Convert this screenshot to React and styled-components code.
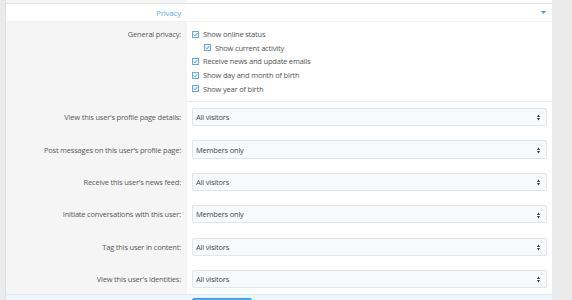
import React from "react"
import styled, { createGlobalStyle } from "styled-components"

const GlobalStyle = createGlobalStyle`
  html, body {
    margin: 0;
    padding: 0;
    background: #ebebeb;
    font-family: "Open Sans", "Noto Sans", sans-serif;
    font-size: 7.5px;
    letter-spacing: -0.2px;
    color: #555;
  }
`

const Page = styled.div`
  padding-left: 5px;
  height: 300px;
  overflow: hidden;
`

const Panel = styled.div`
  width: 546px;
  border-left: 1px solid #e0e0e0;
  background: #fff;
`

const Row = styled.div`
  display: grid;
  grid-template-columns: 181px 1fr;
`

const StubRow = styled(Row)`
  height: 3px;
  border-bottom: 1px solid #e4e4e4;
`

const LabelCell = styled.div`
  background: #f5f5f5;
  text-align: right;
  padding-right: 6px;
  color: #5a5a5a;
`

const ValueCell = styled.div`
  background: #fff;
  padding: 0 5px;
  border-bottom: ${(p) => (p.$separated ? "1px solid #ececec" : "0")};
`

const Header = styled.div`
  display: grid;
  grid-template-columns: 181px 1fr;
  align-items: center;
  height: 17px;
  background: #fff;
  border-bottom: 1px solid #f2f2f2;
`

const HeaderTitle = styled.div`
  text-align: right;
  padding-right: 6px;
  color: #62aee2;
  font-size: 8px;
`

const Toggle = styled.div`
  display: flex;
  justify-content: flex-end;
  padding-right: 6px;
`

const CheckList = styled.div`
  padding: 5.5px 0 6px;
`

const CheckLine = styled.div`
  display: flex;
  align-items: center;
  gap: 4px;
  height: 13.6px;
  padding-left: ${(p) => (p.$indent ? "12px" : "0")};
  color: #555;
`

const CheckLabel = styled(LabelCell)`
  line-height: 13.6px;
  padding-top: 5.5px;
`

const SelectRow = styled(Row)`
  & > div {
    padding-top: 5.5px;
    padding-bottom: ${(p) => (p.$last ? "5.5px" : "8.6px")};
  }
`

const SelectLabel = styled(LabelCell)`
  display: flex;
  align-items: center;
  justify-content: flex-end;
`

const SelectBox = styled.div`
  position: relative;
  height: 18.3px;
  box-sizing: border-box;
  border: 1px solid #e1e6ea;
  border-radius: 2px;
  background: #f6fafd;
  display: flex;
  align-items: center;
  padding-left: 3px;
  color: #484848;
`

const Arrows = styled.svg`
  position: absolute;
  right: 6px;
  top: 5.5px;
`

const SubmitBar = styled.div`
  background: #eef6fd;
  border-top: 1px solid #dde9f3;
  padding: 3px 0 0 186px;
  height: 20px;
`

const Button = styled.div`
  width: 60px;
  height: 20px;
  box-sizing: border-box;
  border: 1px solid #3f9be0;
  border-radius: 2px;
  background: #55aef0;
`

const Check = () => (
  <svg width="7" height="7" viewBox="0 0 7 7">
    <rect x="0.5" y="0.5" width="6" height="6" fill="#eaf4fc" stroke="#6aaadd" />
    <path d="M1.8 3.6 L3 4.8 L5.3 2.2" fill="none" stroke="#3d8fd6" strokeWidth="0.9" />
  </svg>
)

const checks = [
  { text: "Show online status" },
  { text: "Show current activity", indent: true },
  { text: "Receive news and update emails" },
  { text: "Show day and month of birth" },
  { text: "Show year of birth" },
]

const selects = [
  ["View this user's profile page details:", "All visitors"],
  ["Post messages on this user's profile page:", "Members only"],
  ["Receive this user's news feed:", "All visitors"],
  ["Initiate conversations with this user:", "Members only"],
  ["Tag this user in content:", "All visitors"],
  ["View this user's identities:", "All visitors"],
]

export default function App() {
  return (
    <Page>
      <GlobalStyle />
      <Panel>
        <StubRow>
          <LabelCell />
          <ValueCell />
        </StubRow>
        <Header>
          <HeaderTitle>Privacy</HeaderTitle>
          <Toggle>
            <svg width="5" height="3" viewBox="0 0 5 3">
              <path d="M0 0 H5 L2.5 3 Z" fill="#4a97d6" />
            </svg>
          </Toggle>
        </Header>
        <Row>
          <CheckLabel>General privacy:</CheckLabel>
          <ValueCell $separated>
            <CheckList>
              {checks.map((c) => (
                <CheckLine key={c.text} $indent={c.indent}>
                  <Check />
                  <span>{c.text}</span>
                </CheckLine>
              ))}
            </CheckList>
          </ValueCell>
        </Row>
        {selects.map(([label, value], i) => (
          <SelectRow key={label} $last={i === selects.length - 1}>
            <SelectLabel>{label}</SelectLabel>
            <ValueCell>
              <SelectBox>
                {value}
                <Arrows width="3" height="7" viewBox="0 0 3 7">
                  <path d="M0 3 L1.5 0.5 L3 3 Z M0 4 L1.5 6.5 L3 4 Z" fill="#333" />
                </Arrows>
              </SelectBox>
            </ValueCell>
          </SelectRow>
        ))}
        <SubmitBar>
          <Button />
        </SubmitBar>
      </Panel>
    </Page>
  )
}
